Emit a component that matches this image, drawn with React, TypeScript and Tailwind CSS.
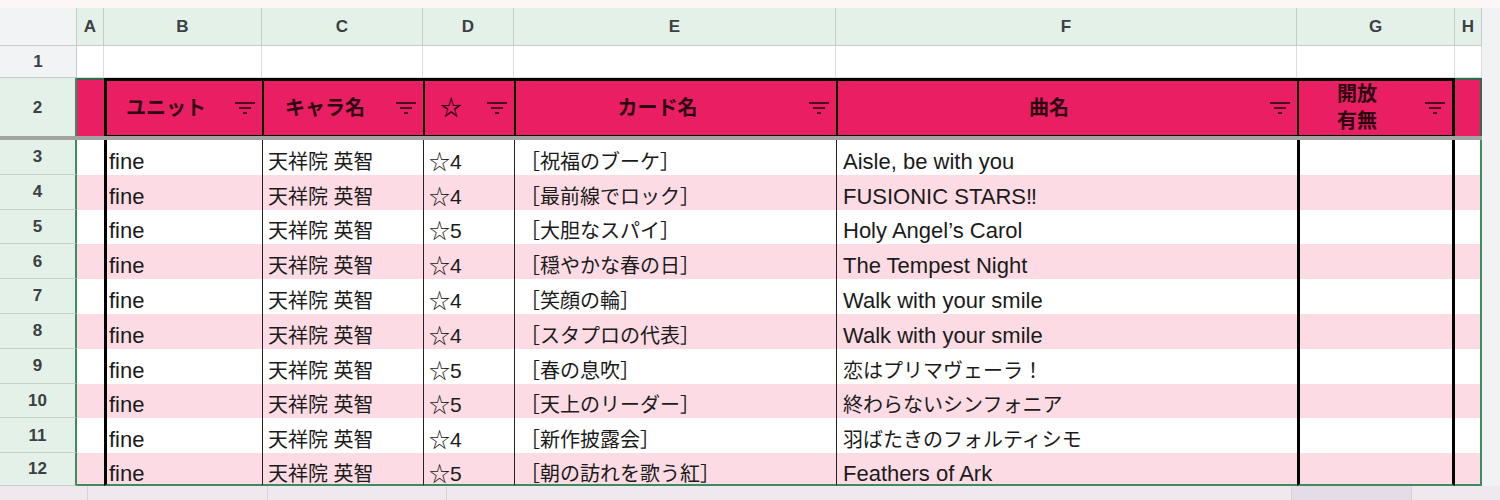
const cols =
  "grid grid-cols-[77px_27px_158px_161px_91px_322px_461px_158px_27px_18px]";

const letters = ["A", "B", "C", "D", "E", "F", "G", "H"];

const cards = [
  ["☆4", "［祝福のブーケ］", "Aisle, be with you"],
  ["☆4", "［最前線でロック］", "FUSIONIC STARS‼"],
  ["☆5", "［大胆なスパイ］", "Holy Angel’s Carol"],
  ["☆4", "［穏やかな春の日］", "The Tempest Night"],
  ["☆4", "［笑顔の輪］", "Walk with your smile"],
  ["☆4", "［スタプロの代表］", "Walk with your smile"],
  ["☆5", "［春の息吹］", "恋はプリマヴェーラ！"],
  ["☆5", "［天上のリーダー］", "終わらないシンフォニア"],
  ["☆4", "［新作披露会］", "羽ばたきのフォルティシモ"],
  ["☆5", "［朝の訪れを歌う紅］", "Feathers of Ark"],
];

// japanese strings render a bit smaller than latin ones in the screenshot
const isJa = (s: string) => /[\u3040-\u9fff\uff00-\uffef]/.test(s);

function FilterIcon() {
  return (
    <svg width="20" height="14" viewBox="0 0 20 14" className="shrink-0 ml-[10px] mr-[7px]">
      <rect x="0" y="1" width="20" height="2" fill="#4d0b1f" />
      <rect x="4" y="6" width="12" height="2" fill="#4d0b1f" />
      <rect x="8" y="11" width="4" height="2" fill="#4d0b1f" />
    </svg>
  );
}

function HeadCell({ label, className }: { label: React.ReactNode; className: string }) {
  return (
    <div className={`flex items-center bg-[#e91e63] border-black border-y-[3px] ${className}`}>
      <div className="flex-1 text-center text-[20px] leading-[27px] font-bold text-[#2d0610]">{label}</div>
      <FilterIcon />
    </div>
  );
}

function Cell({ text, cut, className }: { text?: string; cut?: boolean; className: string }) {
  const size = !text ? "" : isJa(text) ? "text-[20px]" : text.startsWith("☆") ? "text-[21px]" : "text-[22px]";
  return (
    <div
      className={`flex items-end leading-[20px] text-[#1b1b1b] whitespace-nowrap ${cut ? "pb-0" : "pb-[3px]"} ${size} ${className}`}
    >
      {text}
    </div>
  );
}

export default function App() {
  return (
    <div className="w-[1500px] h-[500px] overflow-hidden bg-white font-['Liberation_Sans','Noto_Sans_CJK_JP',sans-serif]">
      <div className="h-[8px] bg-[#fcf7f6]" />

      {/* column letters */}
      <div className={`${cols} h-[38px]`}>
        <div className="bg-[#f1f3f4] border-r border-b border-[#c8cac9]" />
        {letters.map((l) => (
          <div
            key={l}
            className="flex items-center justify-center bg-[#e3f1e8] border-r border-b border-[#c8cac9] text-[17px] font-bold text-[#3c4043] overflow-hidden"
          >
            {l}
          </div>
        ))}
        <div className="bg-[#f1f2f4]" />
      </div>

      {/* row 1 */}
      <div className={`${cols} h-[32px]`}>
        <div className="flex items-center justify-center bg-[#f1f3f4] border-r border-b border-[#c8cac9] text-[17px] font-bold text-[#3c4043]">
          1
        </div>
        {letters.map((l) => (
          <div key={l} className="border-r border-b border-[#dadce0]" />
        ))}
        <div className="bg-[#f1f2f4]" />
      </div>

      {/* row 2: header */}
      <div className={`${cols} h-[58px]`}>
        <div className="flex items-center justify-center bg-[#e3f1e8] border-r-2 border-r-[#3d8b5f] text-[17px] font-bold text-[#3c4043]">
          2
        </div>
        <div className="bg-[#e91e63] border-t-2 border-[#2f6b4a]" />
        <HeadCell label="ユニット" className="border-l-[3px]" />
        <HeadCell label="キャラ名" className="border-l-2" />
        <HeadCell label={<span className="text-[22px]">☆</span>} className="border-l-2" />
        <HeadCell label="カード名" className="border-l-2" />
        <HeadCell label="曲名" className="border-l-2" />
        <HeadCell
          label={
            <>
              開放
              <br />
              有無
            </>
          }
          className="border-l-2 border-r-[3px]"
        />
        <div className="bg-[#e91e63] border-t-2 border-r-2 border-[#2f6b4a]" />
        <div className="bg-[#f1f2f4]" />
      </div>

      {/* freeze divider */}
      <div className={`${cols} h-[4px]`}>
        <div className="col-span-9 bg-[#a3a3a3]" />
        <div className="bg-[#f1f2f4]" />
      </div>

      {/* body rows, the last one is cut off by the tab strip */}
      {cards.map(([star, card, song], i) => {
        const isLast = i === cards.length - 1;
        const bg = i % 2 === 0 ? "bg-white" : "bg-[#fcdbe4]";
        const last = isLast ? "border-b-2 border-b-[#3d8b5f]" : "";
        return (
          <div key={i} className={`${cols} ${isLast ? "h-[32.8px]" : "h-[34.8px]"}`}>
            <div className="flex items-center justify-center bg-[#e3f1e8] border-b border-b-[#c8cfca] border-r-2 border-r-[#3d8b5f] text-[17px] font-bold text-[#3c4043]">
              {i + 3}
            </div>
            <div className={`${bg} ${last}`} />
            <Cell text="fine" cut={isLast} className={`${bg} ${last} border-l-[3px] border-l-black pl-[2px]`} />
            <Cell text="天祥院 英智" cut={isLast} className={`${bg} ${last} border-l border-l-[#222] pl-[5px]`} />
            <Cell text={star} cut={isLast} className={`${bg} ${last} border-l border-l-[#222] pl-[5px]`} />
            <Cell text={card} cut={isLast} className={`${bg} ${last} border-l border-l-[#222] pl-[5px]`} />
            <Cell text={song} cut={isLast} className={`${bg} ${last} border-l border-l-[#222] pl-[6px]`} />
            <Cell className={`${bg} ${last} border-l-[3px] border-l-black border-r-[3px] border-r-black`} />
            <div className={`${bg} ${last} border-r-2 border-r-[#3d8b5f]`} />
            <div className="bg-[#f1f2f4]" />
          </div>
        );
      })}

      {/* sheet tabs strip */}
      <div className="flex h-[14px] bg-[#efe9ef]">
        <div className="w-[88px] border-r border-[#d9d2da]" />
        <div className="w-[180px] border-r border-[#d9d2da]" />
        <div className="w-[179px] border-r border-[#d9d2da]" />
        <div className="w-[845px] border-r border-[#d9d2da]" />
        <div className="w-[120px] bg-[#e4dce6] border-r border-[#d9d2da]" />
        <div className="flex-1" />
      </div>
    </div>
  );
}
